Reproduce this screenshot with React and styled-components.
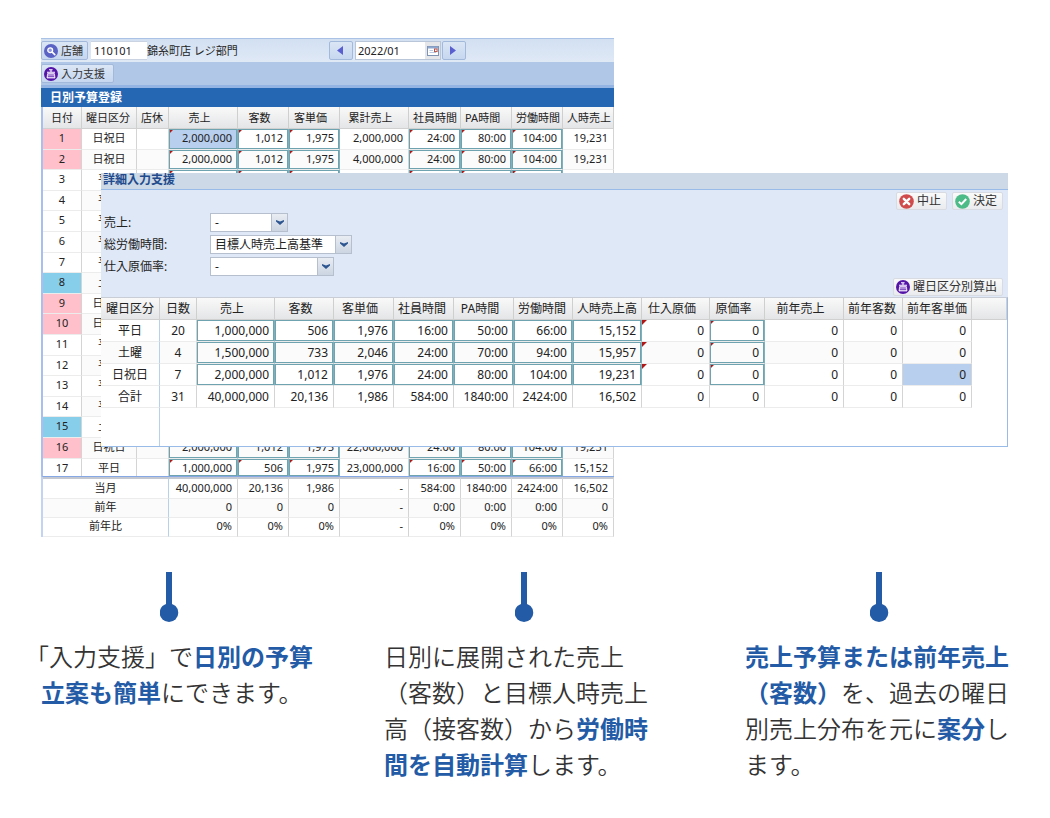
import React from "react";
import styled, { createGlobalStyle, css } from "styled-components";

const GlobalStyle = createGlobalStyle`
  *, *::before, *::after { box-sizing: border-box; }
  body {
    margin: 0;
    background: #fff;
    color: #222;
    font-family: "Noto Sans", "Noto Sans CJK JP", sans-serif;
    font-size: 11px;
    line-height: 16px;
  }
  button, input, select { font: inherit; color: inherit; margin: 0; }
`;

const Page = styled.main`
  padding: 38px 41px;
`;

/* The dialog shares the grid row with the screen it lies over. */
const Stage = styled.section`
  display: grid;
  grid-template-columns: 60px 513fr 394fr;
  padding-right: 1px;
`;

const Screen = styled.div`
  grid-column: 1 / 3;
  grid-row: 1;
  min-width: 0;
  overflow: hidden;
`;

const Dialog = styled.section`
  grid-column: 2 / 4;
  grid-row: 1;
  align-self: start;
  z-index: 1;
  margin-top: 135px;
  min-width: 0;
  font-size: 12px;
  background: #dfe8f6;
  border-bottom: 1px solid #99bbe8;
`;

const Toolbar = styled.div`
  display: flex;
  align-items: center;
  height: 24px;
  background: linear-gradient(#d3e0f2, #dfe9f6);
  border-top: 1px solid #a9c2e6;
`;

const SubToolbar = styled.div`
  display: flex;
  align-items: center;
  height: 26px;
  background: #b1c7e7;
  border-bottom: 3px solid #94b4e4;
`;

const ToolButton = styled.button`
  display: inline-flex;
  align-items: center;
  justify-content: center;
  gap: 3px;
  height: 19px;
  min-width: 24px;
  padding: 0 4px 0 2px;
  white-space: nowrap;
  color: #333;
  background: linear-gradient(#dbe6f5, #c6d7ef);
  border: 1px solid #a3b9dc;
  border-radius: 2px;
  ${(p) => p.$wide && "padding-right: 8px;"}
`;

const DialogButton = styled(ToolButton)`
  height: 18px;
  padding: 0 5px 0 2px;
  background: linear-gradient(#fafafa, #e9ebee);
  border-color: #d8dce2;
`;

const StoreInput = styled.input`
  width: 56px;
  height: 19px;
  margin-left: 3px;
  padding: 0 3px;
  background: #fff;
  border: 1px solid #c9d3e2;
  border-width: 1px 0;
`;

const StoreName = styled.span`
  flex: 0 0 182px;
  white-space: nowrap;
`;

const MonthField = styled.span`
  display: flex;
  width: 86px;
  height: 19px;
  margin: 0 1px 0 2px;
  background: #fff;
  border: 1px solid #b9c6d9;
`;

const MonthInput = styled.input`
  flex: 1;
  min-width: 0;
  padding: 0 2px;
  background: transparent;
  border: 0;
`;

const CalendarButton = styled.button`
  display: flex;
  align-items: center;
  justify-content: center;
  width: 15px;
  padding: 0;
  background: #e4e6ea;
  border: 0;
`;

const GridTitle = styled.h1`
  height: 19px;
  margin: 0;
  padding: 0 9px;
  color: #fff;
  font-size: 12px;
  line-height: 19px;
  background: #2667b4;
`;

const DialogTitle = styled.h2`
  height: 17px;
  margin: 0;
  padding: 0 2px;
  color: #224b8d;
  font-size: 12px;
  line-height: 14px;
  background: #cdd9e6;
  border-bottom: 1px solid #99bbe8;
`;

const ButtonRow = styled.div`
  display: flex;
  justify-content: flex-end;
  gap: 5px;
  padding: 2px 5px 1px;
`;

const Form = styled.form`
  display: grid;
  grid-template-columns: 106px auto;
  justify-content: start;
  gap: 3px 0;
  padding: 2px 3px 0;
`;

const FieldLabel = styled.label`
  line-height: 19px;
`;

const Combo = styled.span`
  display: flex;
  height: 19px;
  background: #fff;
  border: 1px solid #b5bfce;
  width: ${(p) => p.$width}px;
`;

const ComboSelect = styled.select`
  flex: 1;
  min-width: 0;
  padding: 0 4px;
  appearance: none;
  background: transparent;
  border: 0;
  border-radius: 0;
`;

const ComboArrow = styled.span`
  display: flex;
  align-items: center;
  justify-content: center;
  width: 16px;
  background: linear-gradient(#e9edf3, #ccd5e2);
  border-left: 1px solid #b5bfce;
  pointer-events: none;
`;

const Table = styled.table`
  width: 100%;
  table-layout: fixed;
  border-collapse: separate;
  border-spacing: 0;
  background: #fff;
  line-height: 14px;
`;

const BudgetTable = styled(Table)`
  border-left: 2px solid #a9bfee;
  tbody td { height: 21px; padding-bottom: 2px; }
  tbody tr:nth-child(5n + 2) td,
  tbody tr:nth-child(5n + 4) td { height: 20px; padding-bottom: 1px; }
  tbody tr:last-child td { height: 17px; padding-bottom: 0; border-bottom: 0; }
`;

const TotalsTable = styled(Table)`
  border-left: 2px solid #c3d3f2;
  border-top: 1px solid #86a9e6;
  tbody td, tbody th { height: 19px; padding-bottom: 2px; }
  tbody tr:first-child > * { height: 22px; border-top: 2px solid #c4c8d0; }
`;

const SupportTable = styled(Table)`
  border-right: 1px solid #99bbe8;
  border-top: 1px solid #c9ced6;
  tbody td, tbody th { height: 22px; padding-top: 1px; }
`;

const HeadCell = styled.th`
  height: ${(p) => p.$height}px;
  padding: ${(p) => (p.$plain ? "0" : "0 11px 0 4px")};
  font-weight: 400;
  text-align: center;
  white-space: nowrap;
  background: linear-gradient(#f9f9f9, #e4e5e7);
  border-right: 1px solid #cfcfcf;
  border-bottom: 1px solid #d0d0d0;
`;

const dayColors = { holiday: "#ffc0cb", saturday: "#87ceeb" };

const frame = css`
  box-shadow: inset 0 0 0 1px #6fa3b0;
  border-right-color: #7fb0bd;
`;

const Cell = styled.td`
  padding: 0 5px;
  overflow: hidden;
  font-weight: 400;
  white-space: nowrap;
  text-align: ${(p) => (p.$center ? "center" : "right")};
  background-color: ${(p) =>
    p.$selected ? "#b8cfee" : dayColors[p.$day] || (p.$shade ? "#fafbfa" : "#fff")};
  border-right: 1px solid ${(p) => (p.$blueLine ? "#b5d2ea" : "#d4d4d4")};
  border-bottom: 1px solid #ececec;
  ${(p) =>
    p.$dirty &&
    "background-image: linear-gradient(135deg, #b01818 0, #b01818 3px, transparent 4px);"}
  ${(p) => p.$framed && frame}
`;

const FillerCell = styled.td`
  && { height: 38px; }
  padding: 0;
  border-right: ${(p) => (p.$line ? "1px solid #b5d2ea" : "0")};
`;

const Pins = styled.div`
  display: flex;
  justify-content: space-between;
  margin-top: 35px;
  padding: 0 120px 0 119px;
`;

const Notes = styled.section`
  display: grid;
  grid-template-columns: 343fr 361fr 264fr;
  margin-top: 16px;
`;

const Note = styled.p`
  margin: 0;
  color: #333;
  font-family: "Noto Sans CJK JP", sans-serif;
  font-size: 24px;
  font-weight: 350;
  line-height: 36px;
  white-space: nowrap;
  ${(p) => p.$hanging && "text-indent: -16px;"}
  strong { color: #235ba6; font-weight: 700; }
`;

const Pin = () => (
  <svg width="19" height="50" viewBox="0 0 19 50" fill="#235ba6" aria-hidden="true">
    <rect x="6" width="6" height="36" />
    <circle cx="9" cy="40.7" r="9.3" />
  </svg>
);

const RegisterIcon = () => (
  <svg width="14" height="14" viewBox="0 0 14 14" aria-hidden="true">
    <circle cx="7" cy="7" r="7" fill="#5514a8" />
    <path d="M5 2.8H8.6M7 2.8V5M3 5.3H11" fill="none" stroke="#fff" strokeWidth="1.1" />
    <path d="M3.6 6.6H10.4L11 11H3Z" fill="#d9c8f0" stroke="#fff" strokeWidth="0.7" />
    <path d="M4.2 8H9.8M4 9.6H10" stroke="#5514a8" strokeWidth="0.7" />
  </svg>
);

const SearchIcon = () => (
  <svg width="14" height="14" viewBox="0 0 14 14" aria-hidden="true">
    <circle cx="7" cy="7" r="7" fill="#5a62c4" />
    <circle cx="6.2" cy="6.2" r="2.4" fill="#8f96e0" stroke="#fff" strokeWidth="1.3" />
    <path d="M8.2 8.2L10.8 10.6" stroke="#fff" strokeWidth="1.6" strokeLinecap="round" />
  </svg>
);

const CancelIcon = () => (
  <svg width="15" height="15" viewBox="0 0 15 15" aria-hidden="true">
    <circle cx="7.5" cy="7.5" r="7.3" fill="#d04b4b" />
    <path d="M4.8 4.8L10.2 10.2M10.2 4.8L4.8 10.2" stroke="#fff" strokeWidth="2.4" strokeLinecap="round" />
  </svg>
);

const OkIcon = () => (
  <svg width="15" height="15" viewBox="0 0 15 15" aria-hidden="true">
    <circle cx="7.5" cy="7.5" r="7.3" fill="#4dbb87" />
    <path d="M3.8 7.8L6.4 10.2L11.2 5" fill="none" stroke="#fff" strokeWidth="2" />
  </svg>
);

const CalendarIcon = () => (
  <svg width="12" height="12" viewBox="0 0 12 12" aria-hidden="true">
    <rect x="0.5" y="1.5" width="11" height="9" fill="#fff" stroke="#7f93b5" />
    <rect x="1" y="1.5" width="10" height="2" fill="#8fa8cf" />
    <path d="M2.5 5.5H6M2.5 7.5H9" stroke="#b9c9e2" />
    <rect x="7.5" y="4" width="2.6" height="2.6" fill="none" stroke="#b5524a" />
  </svg>
);

const Arrow = ({ left }) => (
  <svg width="6" height="9" viewBox="0 0 6 9" fill="#5a5fcf" aria-hidden="true">
    <path d={left ? "M6 0V9L0 4.5Z" : "M0 0V9L6 4.5Z"} />
  </svg>
);

const ComboField = ({ id, label, width, value }) => (
  <>
    <FieldLabel htmlFor={id}>{label}:</FieldLabel>
    <Combo $width={width}>
      <ComboSelect id={id} defaultValue={value}>
        <option>{value}</option>
      </ComboSelect>
      <ComboArrow>
        <svg width="8" height="5" viewBox="0 0 8 5" aria-hidden="true">
          <path d="M0 0L4 1.6L8 0V1.6L4 5L0 1.6Z" fill="#2d5590" />
        </svg>
      </ComboArrow>
    </Combo>
  </>
);

const Columns = ({ widths }) => (
  <colgroup>
    {widths.map((w, i) => (
      <col key={i} style={w ? { width: w } : undefined} />
    ))}
  </colgroup>
);

const budgetWidths = [39, 55, 32, 69, 51, 51, 69, 52, 51, 51, 51];
const budgetHeads = ["日付", "曜日区分", "店休", "売上", "客数", "客単価", "累計売上", "社員時間", "PA時間", "労働時間", "人時売上"];
const budgetFramed = [0, 1, 2, 4, 5, 6];

const holiday = (total) => ["2,000,000", "1,012", "1,975", total, "24:00", "80:00", "104:00", "19,231"];
const blank = Array(8).fill("");
const kinds = { weekday: "平日", saturday: "土曜", holiday: "日祝日" };
const dayKinds = [
  "holiday", "holiday", "weekday", "weekday", "weekday", "weekday", "weekday", "saturday", "holiday",
  "holiday", "weekday", "weekday", "weekday", "weekday", "saturday", "holiday", "weekday",
];
const dayValues = {
  1: holiday("2,000,000"),
  2: holiday("4,000,000"),
  16: holiday("22,000,000"),
  17: ["1,000,000", "506", "1,975", "23,000,000", "16:00", "50:00", "66:00", "15,152"],
};

const totals = [
  ["当月", "40,000,000", "20,136", "1,986", "-", "584:00", "1840:00", "2424:00", "16,502"],
  ["前年", "0", "0", "0", "-", "0:00", "0:00", "0:00", "0"],
  ["前年比", "0%", "0%", "0%", "-", "0%", "0%", "0%", "0%"],
];

const supportWidths = [59, 37, 78, 59, 60, 60, 60, 59, 69, 68, 55, 79, 59, 69, 0];
const supportHeads = [
  "曜日区分", "日数", "売上", "客数", "客単価", "社員時間", "PA時間", "労働時間", "人時売上高",
  "仕入原価", "原価率", "前年売上", "前年客数", "前年客単価", "",
];
const supportRows = [
  ["平日", "20", "1,000,000", "506", "1,976", "16:00", "50:00", "66:00", "15,152", "0", "0", "0", "0", "0"],
  ["土曜", "4", "1,500,000", "733", "2,046", "24:00", "70:00", "94:00", "15,957", "0", "0", "0", "0", "0"],
  ["日祝日", "7", "2,000,000", "1,012", "1,976", "24:00", "80:00", "104:00", "19,231", "0", "0", "0", "0", "0"],
  ["合計", "31", "40,000,000", "20,136", "1,986", "584:00", "1840:00", "2424:00", "16,502", "0", "0", "0", "0", "0"],
];

const BudgetGrid = () => (
  <BudgetTable>
    <Columns widths={budgetWidths} />
    <thead>
      <tr>
        {budgetHeads.map((h, i) => (
          <HeadCell key={h} scope="col" $height={22} $plain={i === 0}>{h}</HeadCell>
        ))}
      </tr>
    </thead>
    <tbody>
      {dayKinds.map((kind, i) => {
        const shade = i % 2 === 1;
        return (
          <tr key={i}>
            <Cell $center $day={kind}>{i + 1}</Cell>
            <Cell $center $shade={shade}>{kinds[kind]}</Cell>
            <Cell $shade={shade} />
            {(dayValues[i + 1] || blank).map((v, c) => (
              <Cell
                key={c}
                $shade={shade}
                $framed={budgetFramed.includes(c)}
                $dirty={budgetFramed.includes(c)}
                $selected={i === 0 && c === 0}
              >
                {v}
              </Cell>
            ))}
          </tr>
        );
      })}
    </tbody>
  </BudgetTable>
);

const TotalsGrid = () => (
  <TotalsTable>
    <Columns widths={budgetWidths} />
    <tbody>
      {totals.map(([label, ...values], i) => (
        <tr key={label}>
          <Cell as="th" scope="row" colSpan={3} $center $blueLine $shade={i === 1}>{label}</Cell>
          {values.map((v, c) => (
            <Cell key={c} $shade={i === 1}>{v}</Cell>
          ))}
        </tr>
      ))}
    </tbody>
  </TotalsTable>
);

const SupportGrid = () => (
  <SupportTable>
    <Columns widths={supportWidths} />
    <thead>
      <tr>
        {supportHeads.map((h, i) => (
          <HeadCell key={i} scope="col" $height={22} $plain={i < 2}>{h}</HeadCell>
        ))}
      </tr>
    </thead>
    <tbody>
      {supportRows.map((row, r) => (
        <tr key={row[0]}>
          {row.map((v, c) => {
            const editable = r < 3;
            return (
              <Cell
                key={c}
                $center={c < 2}
                $blueLine={c === 0}
                $shade={r === 1}
                $framed={editable && ((c > 1 && c < 9) || c === 10)}
                $dirty={editable && (c === 9 || c === 10)}
                $selected={r === 2 && c === 13}
              >
                {v}
              </Cell>
            );
          })}
          <td />
        </tr>
      ))}
      <tr>
        <FillerCell $line />
        <FillerCell colSpan={14} />
      </tr>
    </tbody>
  </SupportTable>
);

export default function App() {
  return (
    <Page>
      <GlobalStyle />
      <Stage>
        <Screen>
          <Toolbar>
            <ToolButton type="button"><SearchIcon />店舗</ToolButton>
            <StoreInput aria-label="店舗" defaultValue="110101" />
            <StoreName>錦糸町店 レジ部門</StoreName>
            <ToolButton type="button"><Arrow left /></ToolButton>
            <MonthField>
              <MonthInput aria-label="年月" defaultValue="2022/01" />
              <CalendarButton type="button" aria-label="カレンダー"><CalendarIcon /></CalendarButton>
            </MonthField>
            <ToolButton type="button"><Arrow /></ToolButton>
          </Toolbar>
          <SubToolbar>
            <ToolButton type="button" $wide><RegisterIcon />入力支援</ToolButton>
          </SubToolbar>
          <GridTitle>日別予算登録</GridTitle>
          <BudgetGrid />
          <TotalsGrid />
        </Screen>

        <Dialog role="dialog" aria-labelledby="support-title">
          <DialogTitle id="support-title">詳細入力支援</DialogTitle>
          <ButtonRow>
            <DialogButton type="button"><CancelIcon />中止</DialogButton>
            <DialogButton type="button"><OkIcon />決定</DialogButton>
          </ButtonRow>
          <Form>
            <ComboField id="sales" label="売上" width={78} value="-" />
            <ComboField id="hours" label="総労働時間" width={142} value="目標人時売上高基準" />
            <ComboField id="cost" label="仕入原価率" width={124} value="-" />
          </Form>
          <ButtonRow>
            <DialogButton type="button"><RegisterIcon />曜日区分別算出</DialogButton>
          </ButtonRow>
          <SupportGrid />
        </Dialog>
      </Stage>

      <Pins>
        <Pin />
        <Pin />
        <Pin />
      </Pins>
      <Notes>
        <Note $hanging>
          「入力支援」で<strong>日別の予算<br />立案も簡単</strong>にできます。
        </Note>
        <Note>
          日別に展開された売上<br />（客数）と目標人時売上<br />高（接客数）から<strong>労働時<br />間を自動計算</strong>します。
        </Note>
        <Note>
          <strong>売上予算または前年売上<br />（客数）</strong>を、過去の曜日<br />別売上分布を元に<strong>案分</strong>し<br />ます。
        </Note>
      </Notes>
    </Page>
  );
}
